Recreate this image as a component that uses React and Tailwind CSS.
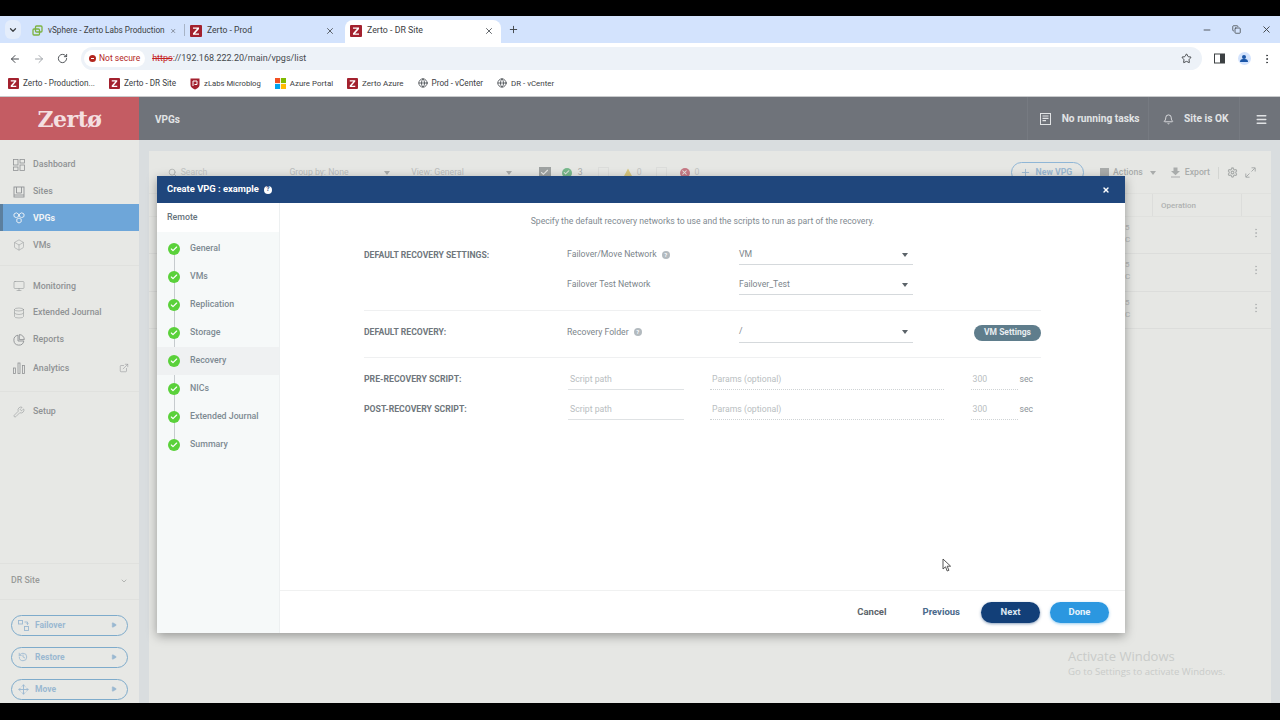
import React from "react";
import { ChevronDown, ArrowLeft, ArrowRight, RotateCw, X, Plus, Star, MoreVertical, Minus, Globe, Bell, Menu, Search, Settings, Check, Play, History, Move, Box, ExternalLink, Copy, Database, Monitor, Wrench } from "lucide-react";

function ZIcon({ size = 12 }) {
  return (
    <svg width={size} height={size} viewBox="0 0 12 12" className="shrink-0">
      <rect width="12" height="12" rx="1" fill="#a3212e" />
      <path d="M3 2.5h6v1.4L5 8.5h4v1.2H3V8.3l4-4.6H3z" fill="#fff" />
    </svg>
  );
}

function ShieldIcon() {
  return (
    <svg width="10" height="12" viewBox="0 0 10 12" className="shrink-0">
      <path d="M0.5 0.5h9v6.5c0 2-2.4 3.6-4.5 4.5C2.900 10.600 0.500 9 0.500 7z" fill="#a3212e" />
      <path d="M3 3h4v3.500H4.500M3 3v5" fill="none" stroke="#fff" strokeWidth="1" />
    </svg>
  );
}

function Tab({ icon, label, active, w, mr, size }) {
  return (
    <div className={"flex items-center h-[23px] px-[5px] pb-[2px] gap-[5px] " + w + (active ? " bg-white rounded-t-lg" : "")}>
      {icon}
      <span className={"flex-1 whitespace-nowrap text-[#3c4043] " + size}>{label}</span>
      <X size={10} className={"text-[#45494e] " + mr} />
    </div>
  );
}

function Bookmark({ icon, label, size = "text-[8.2px]" }) {
  return (
    <div className={"flex items-center gap-[4px] text-[#3c4043] whitespace-nowrap " + size}>
      {icon}
      <span>{label}</span>
    </div>
  );
}

function MsIcon() {
  return (
    <svg width="11" height="11" viewBox="0 0 10 10" className="shrink-0">
      <rect width="4.6" height="4.6" fill="#f25022" />
      <rect x="5.4" width="4.6" height="4.6" fill="#7fba00" />
      <rect y="5.4" width="4.6" height="4.6" fill="#00a4ef" />
      <rect x="5.4" y="5.4" width="4.6" height="4.6" fill="#ffb900" />
    </svg>
  );
}

function VsIcon() {
  return (
    <svg width="11" height="11" viewBox="0 0 11 11" fill="none" stroke="#7cb342" strokeWidth="1.3" className="shrink-0">
      <rect x="3.5" y="1" width="6.5" height="6" rx="1" />
      <rect x="1" y="4" width="6.5" height="6" rx="1" />
    </svg>
  );
}

function DashIcon() {
  return (
    <svg width="12" height="12" viewBox="0 0 12 12" fill="none" stroke="currentColor" strokeWidth="0.8">
      <rect x="0.5" y="0.5" width="4.500" height="5.500" />
      <rect x="7" y="0.5" width="4.500" height="3.500" />
      <rect x="0.5" y="8" width="4.500" height="3.500" />
      <rect x="7" y="6" width="4.500" height="5.500" />
    </svg>
  );
}

function SitesIcon() {
  return (
    <svg width="12" height="12" viewBox="0 0 12 12" fill="none" stroke="currentColor" strokeWidth="0.9">
      <rect x="1" y="1" width="10" height="10" />
      <path d="M3.500 1v6h5V1M1 9h10" />
    </svg>
  );
}

function VpgIcon() {
  return (
    <svg width="12" height="12" viewBox="0 0 12 12" fill="none" stroke="currentColor" strokeWidth="0.9">
      <path d="M3.300 0.800l2.200 1.200v2.500L3.300 5.700 1 4.500V2z" />
      <path d="M8.700 0.800L11 2v2.500L8.700 5.700 6.500 4.500V2z" />
      <path d="M6 6l2.200 1.200v2.600L6 11 3.800 9.800V7.200z" />
    </svg>
  );
}

function ReportsIcon() {
  return (
    <svg width="12" height="12" viewBox="0 0 12 12" fill="none" stroke="currentColor" strokeWidth="0.9">
      <path d="M5 1.200a5 5 0 1 0 5.800 5.800H5z" />
      <path d="M6.300 0.600a5 5 0 0 1 5 5H6.300z" />
    </svg>
  );
}

function BarsIcon() {
  return (
    <svg width="12" height="12" viewBox="0 0 12 12" fill="none" stroke="currentColor" strokeWidth="0.8">
      <rect x="0.5" y="6" width="2" height="5.500" />
      <rect x="5" y="1" width="2" height="10.500" />
      <rect x="9.500" y="3.500" width="2" height="8" />
    </svg>
  );
}

function FailIcon() {
  return (
    <svg width="11" height="11" viewBox="0 0 11 11" fill="none" stroke="currentColor" strokeWidth="0.9">
      <rect x="0.500" y="0.500" width="4" height="3.500" />
      <rect x="6.500" y="6.500" width="4" height="4" />
      <path d="M6.500 2h3v2.500M8.500 3.500l1 1 1-1" />
    </svg>
  );
}

function DocIcon() {
  return (
    <svg width="11" height="12" viewBox="0 0 11 12" fill="none" className="mr-[10.500px]">
      <rect x="0.500" y="0.500" width="10" height="11" stroke="#e1e3e5" fill="#6f737a" />
      <path d="M2.500 3h6M2.500 5.300h6M2.500 7.600h3.500" stroke="#e1e3e5" strokeWidth="1.200" />
    </svg>
  );
}

function ExpandIcon() {
  return (
    <svg width="11" height="11" viewBox="0 0 11 11" fill="none" stroke="#a9acab" strokeWidth="1">
      <path d="M6.500 0.800h3.700v3.700M10 1L6.500 4.500M4.500 10.200H0.800V6.500M1 10l3.500-3.500" />
    </svg>
  );
}

function NavItem({ icon, label, active, extra, mt }) {
  return (
    <div className={"flex items-center h-[26.7px] pt-[2px] " + (mt || "") + " " + (active ? "bg-[#6ea6d9] text-[#f1f4f6] border-l-[3px] border-[#5c7f9e] pl-[10px]" : "text-[#8f9294] pl-[13px]")}>
      <span className="w-[20px] flex justify-start">{icon}</span>
      <span className={"text-[8.8px] " + (active ? "font-bold" : "font-medium")}>{label}</span>
      {extra && <span className="ml-auto mr-[10px]">{extra}</span>}
    </div>
  );
}

function SideAction({ icon, label }) {
  return (
    <div className="flex items-center h-[21px] mx-[11px] w-[117px] rounded-full border border-[#7eabcb] pl-[6px] pr-[10px] text-[#9ab8d1]">
      <span className="w-[17px]">{icon}</span>
      <span className="text-[8.5px] font-bold flex-1">{label}</span>
      <Play size={6} fill="currentColor" />
    </div>
  );
}

function Step({ label, active }) {
  return (
    <div className={"relative flex items-center h-[28px] pl-[11px] " + (active ? "bg-[#eff1f2]" : "")}>
      <span className="w-[12px] h-[12px] rounded-full bg-[#5ad13a] flex items-center justify-center z-10">
        <Check size={8} strokeWidth={3.5} className="text-white" />
      </span>
      <span className="ml-[10px] text-[8.8px] font-medium text-[#7d8a92]">{label}</span>
    </div>
  );
}

function Caret({ color = "border-t-[#5b6369]" }) {
  return <span className={"w-0 h-0 shrink-0 border-l-[3.5px] border-r-[3.5px] border-t-[4px] border-l-transparent border-r-transparent " + color} />;
}

function SelectBox({ value }) {
  return (
    <div className="w-[174px] h-[20px] flex items-center justify-between border-b border-[#d5d9dc] pl-[0.5px] pr-[5px]">
      <span className="text-[8.7px] text-[#7c858b]">{value}</span>
      <Caret />
    </div>
  );
}

function Help() {
  return (
    <span className="w-[8px] h-[8px] rounded-full bg-[#b3babf] text-white text-[6px] font-bold leading-none flex items-center justify-center">?</span>
  );
}

function ScriptRow({ label }) {
  return (
    <div className="flex items-center h-[30px]">
      <span className="w-[204px] text-[8.7px] font-bold text-[#6f777d]">{label}</span>
      <div className="w-[116px] h-[20px] border-b border-[#dfe2e4] pl-[2px] text-[8.7px] text-[#b9bec1] leading-[19px]">Script path</div>
      <div className="ml-[26px] w-[234px] h-[20px] border-b border-dotted border-[#cfd3d5] pl-[2px] text-[8.7px] text-[#b9bec1] leading-[19px]">Params (optional)</div>
      <div className="ml-[27px] w-[46.500px] h-[20px] border-b border-dotted border-[#cfd3d5] pl-[1.500px] text-[8.7px] text-[#b9bec1] leading-[19px]">300</div>
      <span className="ml-[2px] text-[8.7px] text-[#8d9499]">sec</span>
    </div>
  );
}

function BgRow() {
  return (
    <div className="relative h-[37.300px] border-b border-[#dcdddb] flex items-center justify-end pr-[9px] pb-[4px]">
      <MoreVertical size={12} className="text-[#b5b8b8]" />
      <span className="absolute left-[976px] top-[5px] text-[8px] leading-[12px] text-[#b5b8b8]">5<br />C</span>
    </div>
  );
}

export default function App() {
  return (
    <div className="w-[1280px] h-[720px] overflow-hidden bg-black flex flex-col pt-[16px] pb-[17px] font-['Roboto',sans-serif]">
      {/* browser chrome */}
      <div className="h-[27px] bg-[#d3e3fd] flex items-end pl-[5px] shrink-0">
        <div className="w-[16px] h-[19px] mb-[4px] rounded-md bg-[#e4edfb] flex items-center justify-center mr-[6px]">
          <ChevronDown size={10} strokeWidth={3} className="text-[#3c4043]" />
        </div>
        <Tab icon={<VsIcon />} label="vSphere - Zerto Labs Production" w="w-[157px]" mr="mr-[3px]" size="text-[8.2px]" />
        <span className="w-px h-[12px] bg-[#a8b4c6] mb-[7px]" />
        <Tab icon={<ZIcon />} label="Zerto - Prod" w="w-[160px]" mr="mr-[5px]" size="text-[8.600px]" />
        <Tab icon={<ZIcon />} label="Zerto - DR Site" active w="w-[156px]" mr="mr-[2px]" size="text-[8.800px]" />
        <Plus size={11} className="text-[#3c4043] ml-[6.500px] mb-[8px]" />
        <div className="ml-auto flex items-center gap-[20px] pr-[8px] mb-[8px] text-[#3c4043]">
          <Minus size={10} />
          <Copy size={9} />
          <X size={11} />
        </div>
      </div>
      <div className="h-[28px] bg-white flex items-center shrink-0 pl-[9px] pr-[7px] pt-[3px]">
        <ArrowLeft size={12} className="text-[#45494e]" />
        <ArrowRight size={12} className="text-[#a2a6ab] ml-[12px]" />
        <RotateCw size={11} className="text-[#45494e] ml-[12px]" />
        <div className="ml-[13px] flex-1 h-[23px] bg-[#edf2f8] rounded-full flex items-center pl-[3px]">
          <div className="h-[17px] bg-white rounded-full flex items-center gap-[3px] px-[5px]">
            <span className="w-[7px] h-[7px] rounded-full bg-[#b3261e] flex items-center justify-center"><span className="w-[3px] h-[1px] bg-white" /></span>
            <span className="text-[8.500px] text-[#b3261e]">Not secure</span>
          </div>
          <span className="ml-[7px] text-[9px] text-[#45494e]"><span className="text-[#c5221f] line-through">https</span>://192.168.222.20/main/vpgs/list</span>
          <Star size={11} className="ml-auto mr-[10px] text-[#3c4043]" />
        </div>
        <svg width="11" height="11" viewBox="0 0 11 11" className="ml-[12px]">
          <rect x="0.500" y="1" width="10" height="9" fill="none" stroke="#3c4043" />
          <rect x="6" y="1" width="4.500" height="9" fill="#3c4043" />
        </svg>
        <span className="ml-[13px] w-[13px] h-[13px] rounded-full bg-[#d3e3fd] flex flex-col items-center justify-center">
          <span className="w-[4px] h-[4px] rounded-full bg-[#1a56a8]" />
          <span className="w-[8px] h-[3px] rounded-t-sm bg-[#1a56a8] mt-[0.500px]" />
        </span>
        <MoreVertical size={12} className="ml-[10.500px] text-[#3c4043]" />
      </div>
      <div className="h-[26px] bg-white flex items-center gap-[14px] pl-[8px] shrink-0 border-b border-[#c9cbcd]">
        <Bookmark icon={<ZIcon size={11} />} label="Zerto - Production..." />
        <Bookmark icon={<ZIcon size={11} />} label="Zerto - DR Site" />
        <Bookmark icon={<ShieldIcon />} label="zLabs Microblog" size="text-[7.700px]" />
        <Bookmark icon={<MsIcon />} label="Azure Portal" size="text-[7.900px]" />
        <Bookmark icon={<ZIcon size={11} />} label="Zerto Azure" size="text-[8px]" />
        <Bookmark icon={<Globe size={10} className="text-[#4a4f54]" />} label="Prod - vCenter" />
        <Bookmark icon={<Globe size={10} className="text-[#4a4f54]" />} label="DR - vCenter" size="text-[7.900px]" />
      </div>

      {/* app */}
      <div className="relative flex-1 flex flex-col bg-[#e6e7e4] min-h-0">
        <div className="h-[43px] flex bg-[#6f737a] shrink-0">
          <div className="w-[139px] bg-[#c45c63] flex items-center justify-center pt-[2px]">
            <span className="text-[22px] font-bold text-[#f4dfe0] font-['DejaVu_Serif',serif] tracking-[-0.5px]">Zertø</span>
          </div>
          <span className="ml-[16px] mt-[1px] self-center text-[10px] font-bold text-[#e1e3e5]">VPGs</span>
          <div className="ml-auto flex items-center text-[#e1e3e5] h-full">
            <div className="h-full border-l border-[#767a81] flex items-center pl-[12px] pr-[8px] pt-[1px]">
              <DocIcon />
              <span className="text-[10.200px] font-bold">No running tasks</span>
            </div>
            <div className="h-full border-l border-[#767a81] flex items-center pl-[14px] pr-[10px] pt-[1px]">
              <Bell size={11} strokeWidth={2} className="mr-[10.500px]" />
              <span className="text-[10.200px] font-bold">Site is OK</span>
            </div>
            <div className="h-full border-l border-[#767a81] flex items-center pl-[15px] pr-[12.500px] pt-[1px]">
              <Menu size={13} strokeWidth={2.5} />
            </div>
          </div>
        </div>
        <div className="flex-1 flex min-h-0">
          {/* sidebar */}
          <div className="w-[139px] bg-[#e7e8e5] flex flex-col shrink-0">
            <div className="pt-[10.700px]">
              <NavItem icon={<DashIcon />} label="Dashboard" />
              <NavItem icon={<SitesIcon />} label="Sites" />
              <NavItem active icon={<VpgIcon />} label="VPGs" />
              <NavItem icon={<Box size={12} strokeWidth={1} />} label="VMs" />
            </div>
            <div className="border-t border-[#e0e1de] mt-[7.500px] pt-[6px]">
              <NavItem icon={<Monitor size={12} strokeWidth={1.1} />} label="Monitoring" />
              <NavItem icon={<Database size={12} strokeWidth={1.1} />} label="Extended Journal" />
              <NavItem icon={<ReportsIcon />} label="Reports" />
              <NavItem mt="mt-[2px]" icon={<BarsIcon />} label="Analytics" extra={<ExternalLink size={10} strokeWidth={1.3} />} />
            </div>
            <div className="border-t border-[#e0e1de] mt-[10px] pt-[6px]">
              <NavItem icon={<Wrench size={12} strokeWidth={1.1} />} label="Setup" />
            </div>
            <div className="mt-auto border-y border-[#e0e1de] h-[37px] flex items-center justify-between px-[11px] pb-[1px] text-[#999b99]">
              <span className="text-[8.800px] font-medium">DR Site</span>
              <ChevronDown size={8} />
            </div>
            <div className="flex flex-col gap-[11px] pt-[15px] pb-[3.500px]">
              <SideAction icon={<FailIcon />} label="Failover" />
              <SideAction icon={<History size={10} />} label="Restore" />
              <SideAction icon={<Move size={11} />} label="Move" />
            </div>
          </div>
          <div className="w-[10px] bg-[#d9dddf] shrink-0" />
          {/* background list */}
          <div className="flex-1 bg-[#d9dddf] flex flex-col">
            <div className="h-[11px] shrink-0" />
            <div className="flex-1 flex flex-col bg-[#e6e7e4]">
              <div className="h-[42px] flex items-center pl-[19px] pr-[15px] pt-[1px] text-[#a9acab] text-[8.700px] shrink-0">
                <Search size={9} className="shrink-0" />
                <span className="ml-[3.700px] text-[#c2c4c3]">Search</span>
                <span className="ml-[82px] text-[#bcbebd]">Group by: None</span>
                <span className="ml-[35.500px]"><Caret color="border-t-[#a9acab] block" /></span>
                <span className="ml-[21px] text-[#bcbebd]">View: General</span>
                <span className="ml-[42.500px]"><Caret color="border-t-[#a9acab] block" /></span>
                <span className="ml-[26.500px] w-[12px] h-[12px] bg-[#9ea2a1] flex items-center justify-center"><Check size={9} strokeWidth={3} className="text-[#e6e7e4]" /></span>
                <span className="ml-[11px] w-[10px] h-[10px] rounded-full bg-[#78b98c] flex items-center justify-center"><Check size={7} strokeWidth={3.500} className="text-[#e6e7e4]" /></span>
                <span className="ml-[6px]">3</span>
                <span className="ml-[15px] w-[11px] h-[11px] border border-[#dcdddb]" />
                <svg width="10" height="10" viewBox="0 0 10 10" className="ml-[14px]"><path d="M5 0.500L9.800 9.500H0.200z" fill="#d8c77f" /></svg>
                <span className="ml-[4px] text-[#c2c4c3]">0</span>
                <span className="ml-[14px] w-[11px] h-[11px] border border-[#dcdddb]" />
                <span className="ml-[13px] w-[10px] h-[10px] rounded-full bg-[#c77a86] flex items-center justify-center"><X size={7} strokeWidth={3.500} className="text-[#e6e7e4]" /></span>
                <span className="ml-[5px] text-[#c2c4c3]">0</span>
                <div className="ml-auto flex items-center">
                  <div className="w-[73px] h-[21px] rounded-full border border-[#8fb6d6] flex items-center pl-[8px] gap-[5px] text-[#9ab8d1] font-bold"><Plus size={11} />New VPG</div>
                  <span className="ml-[16px] w-[9px] h-[10px] bg-[#a9acab]" />
                  <span className="ml-[4.500px] font-medium">Actions</span>
                  <span className="ml-[7px]"><Caret color="border-t-[#a9acab] block" /></span>
                  <span className="ml-[14px] flex items-center gap-[4px] font-medium">
                    <svg width="11" height="11" viewBox="0 0 11 11" fill="#a9acab"><path d="M3.500 0.500h4v3.500h2.500L5.500 8.200 1 4h2.500zM1 9.500h9v1H1z" /></svg>
                    Export
                  </span>
                  <span className="ml-[8px] w-px h-[12px] bg-[#d3d5d2]" />
                  <Settings size={11} strokeWidth={2.500} className="ml-[7.500px]" />
                  <span className="ml-[7.500px]"><ExpandIcon /></span>
                </div>
              </div>
              <div className="h-[24px] flex items-center justify-end border-y border-[#e0e1de] text-[8px] text-[#afb2b1] font-medium shrink-0">
                <span className="w-[89px] h-full pl-[8px] pt-[1px] border-l border-[#dcdddb] flex items-center">Operation</span>
                <span className="w-[30px] h-full border-l border-[#dcdddb]" />
              </div>
              <BgRow />
              <BgRow />
              <BgRow />
            </div>
          </div>
          <div className="w-[9px] bg-[#d9dddf] shrink-0" />
        </div>

        {/* modal */}
        <div className="absolute left-[157px] top-[79px] w-[968px] h-[457px] bg-white shadow-[0_3px_10px_rgba(0,0,0,0.35)] flex flex-col">
          <div className="h-[27px] bg-[#1f467c] flex items-center pl-[10px] pr-[15px] text-white shrink-0">
            <span className="text-[9.400px] font-bold">Create VPG : example</span>
            <span className="ml-[5px] w-[8px] h-[8px] rounded-full bg-white text-[#1f467c] text-[6.500px] font-bold leading-none flex items-center justify-center">?</span>
            <X size={8} strokeWidth={4} className="ml-auto" />
          </div>
          <div className="flex-1 flex min-h-0">
            <div className="w-[123px] bg-[#f6f9f9] border-r border-[#edf0f1] flex flex-col shrink-0">
              <div className="h-[29px] bg-white flex items-center pl-[10px] text-[8.800px] font-medium text-[#66737c] shrink-0">Remote</div>
              <div className="relative pt-[3px]">
                <div className="absolute left-[16.500px] top-[15px] h-[196px] w-px bg-[#c6cbce]" />
                {["General", "VMs", "Replication", "Storage"].map((s) => <Step key={s} label={s} />)}
                <Step label="Recovery" active />
                {["NICs", "Extended Journal", "Summary"].map((s) => <Step key={s} label={s} />)}
              </div>
            </div>
            <div className="flex-1 flex flex-col">
              <div className="flex-1 flex flex-col">
                <div className="h-[33px] flex items-center justify-center text-[8.670px] text-[#7f8a91] pt-[3px]">Specify the default recovery networks to use and the scripts to run as part of the recovery.</div>
                <div className="ml-[84px] w-[677px] flex flex-col">
                  <div className="border-b border-[#eff0f1] pb-[10px] pt-[4px]">
                    <div className="flex items-center h-[30px]">
                      <span className="w-[203px] text-[8.650px] font-bold text-[#6f777d]">DEFAULT RECOVERY SETTINGS:</span>
                      <span className="w-[171.500px] flex items-center gap-[5px] text-[8.700px] text-[#7c858b]">Failover/Move Network <Help /></span>
                      <SelectBox value="VM" />
                    </div>
                    <div className="flex items-center h-[30px]">
                      <span className="w-[203px]" />
                      <span className="w-[171.500px] text-[8.700px] text-[#7c858b]">Failover Test Network</span>
                      <SelectBox value="Failover_Test" />
                    </div>
                  </div>
                  <div className="border-b border-[#eff0f1] h-[47px] pb-[3px] flex items-center">
                    <span className="w-[203px] text-[8.650px] font-bold text-[#6f777d]">DEFAULT RECOVERY:</span>
                    <span className="w-[171.500px] flex items-center gap-[5px] text-[8.700px] text-[#7c858b]">Recovery Folder <Help /></span>
                    <SelectBox value="/" />
                    <div className="ml-auto w-[67px] h-[16px] rounded-full bg-[#5f7d8c] text-[#e8edf0] text-[8.500px] font-bold flex items-center justify-center">VM Settings</div>
                  </div>
                  <div className="pt-[7px]">
                    <ScriptRow label="PRE-RECOVERY SCRIPT:" />
                    <ScriptRow label="POST-RECOVERY SCRIPT:" />
                  </div>
                </div>
              </div>
              <div className="h-[43px] border-t border-[#f0f1f1] flex items-center justify-end pr-[16px] shrink-0">
                <span className="text-[9.500px] font-bold text-[#5c646a]">Cancel</span>
                <span className="ml-[36px] text-[9.500px] font-bold text-[#4a6a8c]">Previous</span>
                <div className="ml-[21px] w-[59px] h-[21px] rounded-full bg-[#123f78] shadow-[0_1px_3px_rgba(18,63,120,0.5)] text-[#dbe6f2] text-[9.500px] font-bold flex items-center justify-center">Next</div>
                <div className="ml-[10px] w-[59px] h-[21px] rounded-full bg-[#2b97e0] shadow-[0_1px_3px_rgba(43,151,224,0.5)] text-[#e6f3fc] text-[9.500px] font-bold flex items-center justify-center">Done</div>
              </div>
            </div>
          </div>
        </div>

        {/* cursor */}
        <svg className="absolute left-[942px] top-[461px]" width="10" height="14" viewBox="0 0 10 14">
          <path d="M1 1v10l2.500-2.200L5.200 13l1.700-.7L5.200 8.200H8.600z" fill="#fff" stroke="#444" strokeWidth="0.9" />
        </svg>

        {/* watermark */}
        <div className="absolute left-[1068px] top-[551px] text-[#c9cbc9] font-['Open_Sans',sans-serif]">
          <div className="text-[13px] leading-[17px]">Activate Windows</div>
          <div className="text-[9.600px] leading-[14px]">Go to Settings to activate Windows.</div>
        </div>
      </div>
    </div>
  );
}
